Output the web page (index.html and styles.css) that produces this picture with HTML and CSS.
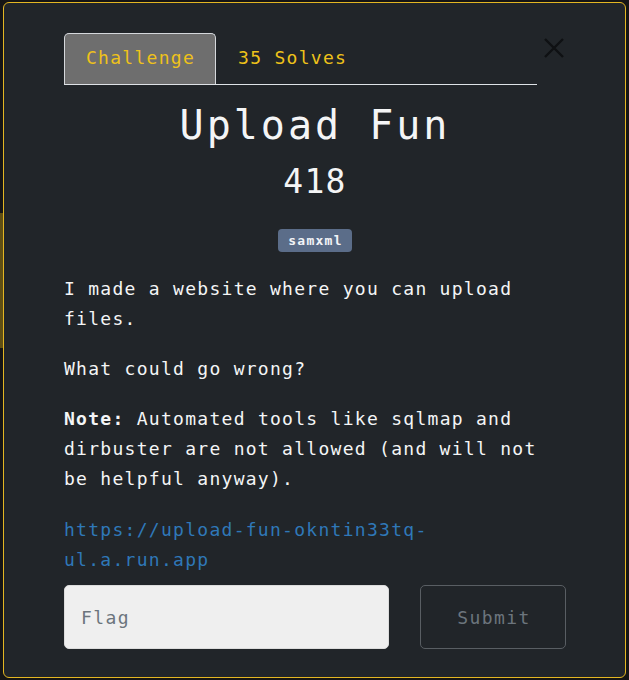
FILE: index.html
```html
<!DOCTYPE html>
<html lang="en">
<head>
<meta charset="utf-8">
<title>Upload Fun</title>
<link rel="stylesheet" href="styles.css">
</head>
<body>
<div class="page">
  <div class="page-strip"></div>
</div>
<div class="modal">
  <div class="modal-head">
    <ul class="tabs">
      <li class="tab active">Challenge</li>
      <li class="tab">35 Solves</li>
    </ul>
    <button class="close" aria-label="Close">
      <svg width="20" height="20" viewBox="0 0 20 20"><path d="M1 1 L19 19 M19 1 L1 19" stroke="#0f1113" stroke-width="2.4" fill="none"/></svg>
    </button>
  </div>
  <h2 class="title">Upload Fun</h2>
  <h3 class="points">418</h3>
  <div class="tags"><span class="badge">samxml</span></div>
  <div class="desc">
    <p>I made a website where you can upload files.</p>
    <p>What could go wrong?</p>
    <p><strong>Note:</strong> Automated tools like sqlmap and dirbuster are not allowed (and will not be helpful anyway).</p>
    <p class="link-p"><a href="#">https://upload-fun-okntin33tq-ul.a.run.app</a></p>
  </div>
  <form class="submit-row">
    <input class="flag" type="text" placeholder="Flag">
    <button class="submit" type="button">Submit</button>
  </form>
</div>
</body>
</html>
```
FILE: styles.css
```css
html, body {
  margin: 0;
  padding: 0;
}
body {
  background: #151515;
  font-family: "DejaVu Sans Mono", monospace;
  width: 629px;
  height: 680px;
  overflow: hidden;
}
.page {
  padding-top: 213px;
}
.page-strip {
  width: 12px;
  height: 135px;
  background: #5f4f14;
}
.modal {
  position: fixed;
  top: 2px;
  left: 3px;
  width: 623px;
  box-sizing: border-box;
  background: #212529;
  border: 1px solid #e3b622;
  border-radius: 6px;
  padding: 30px 59px 28px 60px;
  color: #f4f5f6;
  letter-spacing: 0.08em;
}
.modal-head {
  display: flex;
  align-items: flex-start;
}
.tabs {
  flex: 1;
  display: flex;
  list-style: none;
  margin: 0;
  padding: 0;
  border-bottom: 1px solid #dee2e6;
}
.tab {
  font-size: 18px;
  color: #eec21a;
  line-height: 47px;
  padding: 0 20px 3px 21px;
  box-sizing: border-box;
  height: 51px;
  border: 1px solid transparent;
  border-bottom: 0;
  border-radius: 5px 5px 0 0;
}
.tab.active {
  background: #6e6e6e;
  border-color: #d5d8dc;
}
.close {
  width: 29px;
  background: none;
  border: 0;
  padding: 5px 0 0 5px;
  margin: 0;
  display: flex;
  justify-content: center;
}
.close svg {
  display: block;
}
.title {
  margin: 16px 0 0;
  text-align: center;
  font-size: 40px;
  line-height: 48px;
  font-weight: normal;
  letter-spacing: 0.075em;
}
.points {
  margin: 13px 0 0;
  text-align: center;
  font-size: 33px;
  line-height: 40px;
  font-weight: normal;
}
.tags {
  margin-top: 27px;
  text-align: center;
  height: 23px;
}
.badge {
  display: inline-block;
  background: #5b6d89;
  color: #f2f4f7;
  font-size: 13px;
  font-weight: bold;
  line-height: 23px;
  padding: 0 9px 0 10px;
  border-radius: 4px;
  vertical-align: top;
}
.desc {
  margin-top: 22px;
  font-size: 18px;
  line-height: 30px;
}
.desc p {
  margin: 0 0 20px;
}
.desc p:nth-child(3) {
  margin-bottom: 21px;
}
.desc p.link-p {
  margin-bottom: 10px;
}
.desc a {
  color: #2f78b8;
  text-decoration: none;
}
.desc strong {
  font-weight: bold;
}
.submit-row {
  display: flex;
  gap: 31px;
  margin: 0;
}
.flag {
  width: 325px;
  height: 64px;
  box-sizing: border-box;
  background: #efefef;
  border: 1px solid #dcdcdc;
  border-radius: 5px;
  padding: 0 16px;
  font-family: "DejaVu Sans Mono", monospace;
  font-size: 18px;
  letter-spacing: 0.08em;
  color: #333;
}
.flag::placeholder {
  color: #6c757d;
}
.submit {
  flex: 1;
  height: 64px;
  background: transparent;
  border: 1px solid #595e63;
  border-radius: 5px;
  font-family: "DejaVu Sans Mono", monospace;
  font-size: 18px;
  letter-spacing: 0.08em;
  color: #6c757d;
  padding: 0 0 0 2px;
}
```
